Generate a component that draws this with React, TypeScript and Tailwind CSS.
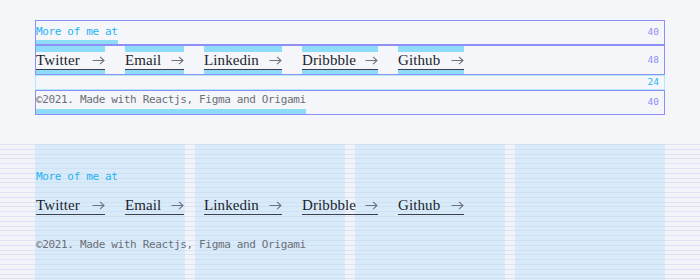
import { ReactNode } from "react";

const links = [
  { name: "Twitter", w: "w-[69px]" },
  { name: "Email", w: "w-[59px]" },
  { name: "Linkedin", w: "w-[78px]" },
  { name: "Dribbble", w: "w-[76px]" },
  { name: "Github", w: "w-[66px]" },
];

const mono = "font-['DejaVu_Sans_Mono',monospace]";
const serif = "font-['Liberation_Serif',serif]";

const Arrow = () => (
  <svg width="13" height="9" viewBox="0 0 13 9" fill="none" className="shrink-0">
    <path d="M0.5 4.5H12M8 0.8L12 4.5L8 8.2" stroke="#6f7380" strokeWidth="1.1" />
  </svg>
);

type RowProps = {
  spec: boolean;
  label: string;
  h: string;
  tone?: "purple" | "cyan";
  children?: ReactNode;
};

const Row = ({ spec, label, h, tone = "purple", children }: RowProps) => {
  const border = !spec
    ? "border-transparent"
    : tone === "cyan"
      ? "border-[#b3e9fb]"
      : "border-[#8d90f6]";
  const labelColor = tone === "cyan" ? "text-[#27b5f2]" : "text-[#8d90f6]";
  return (
    <div className={`${h} border ${border} flex justify-between`}>
      <div className="flex">{children}</div>
      {spec && (
        <span className={`${mono} ${labelColor} text-[9.5px] self-center pr-[5px]`}>
          {label}
        </span>
      )}
    </div>
  );
};

const Footer = ({ spec }: { spec: boolean }) => {
  const bar = spec ? "bg-[#8fdcf8]" : "bg-transparent";
  return (
    <div className="w-[630px]">
      <Row spec={spec} label="40" h="h-[25px]">
        <div className="flex flex-col">
          <span className={`${mono} text-[11px] tracking-[-0.35px] leading-[17px] pt-[2px] text-[#1fb4f2]`}>
            More of me at
          </span>
          <div className={`h-[4px] ${bar}`} />
        </div>
      </Row>
      <Row spec={spec} label="48" h="h-[30px]">
        <div className="flex gap-[20px]">
          {links.map((l) => (
            <div key={l.name} className={`flex flex-col ${l.w}`}>
              <div className={`h-[6px] ${bar}`} />
              <div className="flex items-center justify-between h-[17px]">
                <span className={`${serif} text-[15px] tracking-[0.1px] leading-[17px] text-[#1a1f2c]`}>
                  {l.name}
                </span>
                <Arrow />
              </div>
              <div className="h-[1px] bg-[#3b4050]" />
              <div className={`h-[4px] ${bar}`} />
            </div>
          ))}
        </div>
      </Row>
      <Row spec={spec} label="24" h="h-[15px]" tone="cyan" />
      <Row spec={spec} label="40" h="h-[25px]">
        <div className="flex flex-col">
          <span className={`${mono} text-[11px] tracking-[-0.35px] leading-[18px] text-[#6b6e76]`}>
            ©2021. Made with Reactjs, Figma and Origami
          </span>
          <div className={`h-[5px] ${bar}`} />
        </div>
      </Row>
    </div>
  );
};

export default function App() {
  return (
    <div className="w-[700px] h-[280px] bg-[#f5f6fa] overflow-hidden">
      <div className="pt-[20px] pl-[35px]">
        <Footer spec />
      </div>
      <div className="mt-[29px] h-[136px] grid bg-[repeating-linear-gradient(to_bottom,#dfe2f4_0px,#dfe2f4_1px,#f3f4fa_1px,#f3f4fa_4.8px)]">
        <div className="col-start-1 row-start-1 flex gap-[10px] pl-[35px]">
          {[0, 1, 2, 3].map((c) => (
            <div key={c} className="w-[150px] h-full bg-[#bfe0f8]/50" />
          ))}
        </div>
        <div className="col-start-1 row-start-1 pl-[35px] pt-[21px]">
          <Footer spec={false} />
        </div>
      </div>
    </div>
  );
}
